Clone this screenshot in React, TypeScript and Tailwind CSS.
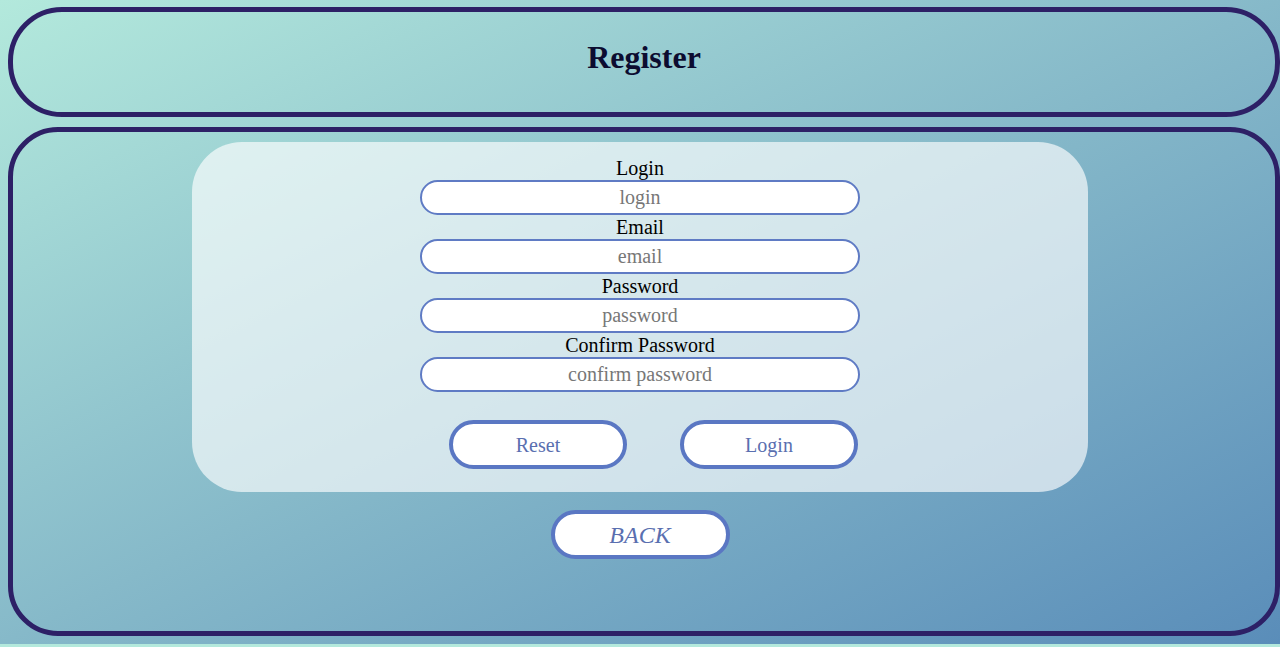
import React from 'react'

const serif = { fontFamily: '"Liberation Serif", "Times New Roman", serif' }

const fields = [
  { label: 'Login', placeholder: 'login', type: 'text' },
  { label: 'Email', placeholder: 'email', type: 'email' },
  { label: 'Password', placeholder: 'password', type: 'password' },
  { label: 'Confirm Password', placeholder: 'confirm password', type: 'password' },
]

export default function App() {
  return (
    <div className="w-[1280px] h-[647px] overflow-hidden bg-[#b3e9dc]" style={serif}>
      <div className="h-[644px] pt-[7px] bg-gradient-to-br from-[#b3e9dc] via-[#86b9c9] to-[#5a8db9]">
        {/* Header */}
        <header className="ml-2 w-[1272px] h-[110px] rounded-[54px] border-[5px] border-[#2d2066] flex items-center justify-center">
          <h1 className="text-[32px] font-bold text-[#0c0c30] leading-none -mt-[10px]">Register</h1>
        </header>

        {/* Main */}
        <main className="ml-2 mt-[10px] w-[1272px] h-[509px] rounded-[50px] border-[5px] border-[#2d2066] pt-[10px]">
          <div className="-ml-[13px] w-[1280px] flex flex-col items-center">
            <form className="w-[896px] h-[350px] rounded-[50px] bg-white/65 flex flex-col items-center pt-[15px]">
              {fields.map(f => (
                <div key={f.label} className="flex flex-col items-center">
                  <label className="text-[20px] leading-[23px] text-black">{f.label}</label>
                  <input
                    type={f.type}
                    placeholder={f.placeholder}
                    className="w-[440px] h-[35px] mb-[1px] rounded-full border-2 border-[#5f7bc4] bg-white text-center text-[20px] text-black placeholder:text-[#777] outline-none"
                    style={serif}
                  />
                </div>
              ))}
              <div className="flex gap-[53px] mt-[27px] ml-[27px]">
                <button type="reset" className="w-[178px] h-[49px] rounded-full border-4 border-[#5a77c3] bg-white text-[20px] text-[#5a6fb0]" style={serif}>
                  Reset
                </button>
                <button type="submit" className="w-[178px] h-[49px] rounded-full border-4 border-[#5a77c3] bg-white text-[20px] text-[#5a6fb0]" style={serif}>
                  Login
                </button>
              </div>
            </form>
            <button className="mt-[18px] w-[179px] h-[49px] rounded-full border-4 border-[#5a77c3] bg-white text-[24px] italic text-[#5a6fb0]" style={serif}>
              BACK
            </button>
          </div>
        </main>
      </div>
    </div>
  )
}
